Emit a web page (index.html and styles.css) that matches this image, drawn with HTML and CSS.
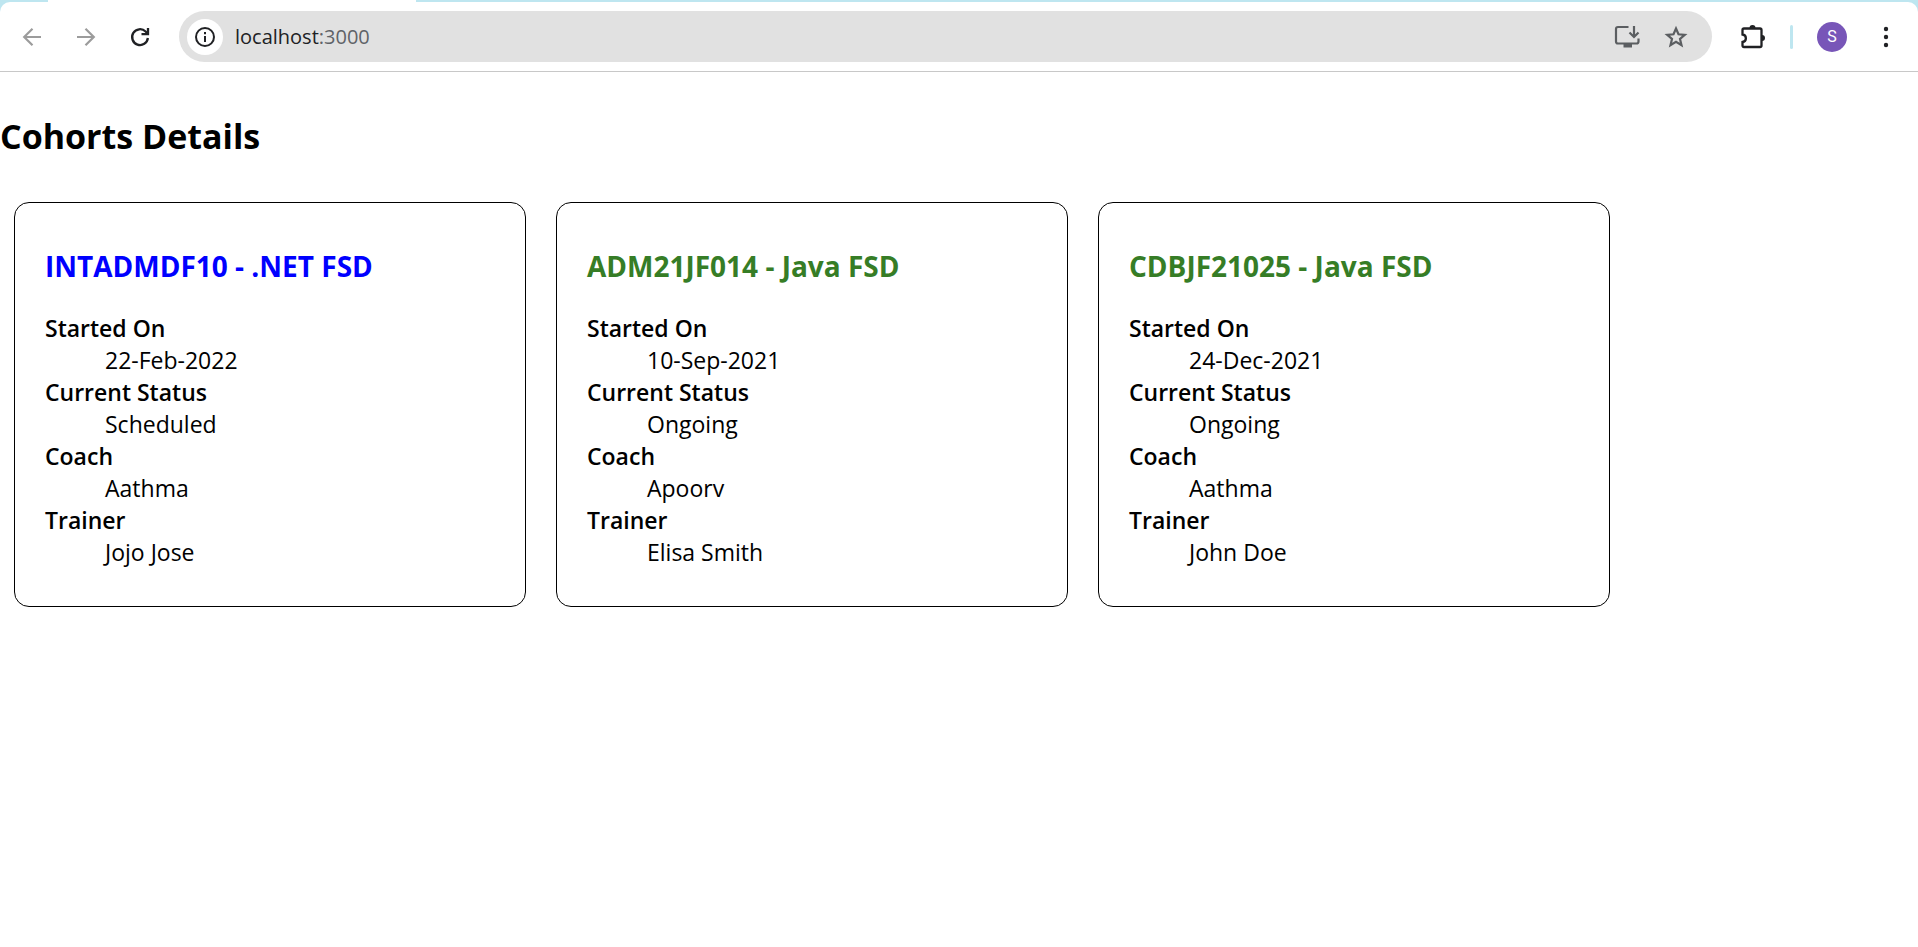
FILE: index.html
```html
<!DOCTYPE html>
<html lang="en">
<head>
<meta charset="utf-8">
<title>Cohorts Details</title>
<link rel="stylesheet" href="styles.css">
</head>
<body>
<header class="browser">
  <div class="tab-strip"><span class="active-tab"></span></div>
  <nav class="toolbar" aria-label="Browser toolbar">
    <button class="icon-button" type="button" aria-label="Back" disabled>
      <svg width="24" height="24" viewBox="0 0 24 24" fill="none" stroke="#9c9c9c" stroke-width="2.200"><path d="M21 12H4.500M12.500 3.700L4.200 12L12.500 20.300"/></svg>
    </button>
    <button class="icon-button" type="button" aria-label="Forward" disabled>
      <svg width="24" height="24" viewBox="0 0 24 24" fill="none" stroke="#9c9c9c" stroke-width="2.200"><path d="M3 12H19.500M11.500 3.700L19.800 12L11.500 20.300"/></svg>
    </button>
    <button class="icon-button" type="button" aria-label="Reload">
      <svg width="24" height="24" viewBox="0 0 24 24" fill="none" stroke="#202124" stroke-width="2.300"><path d="M19.900 13A7.900 7.900 0 1 1 17.600 6.500L19.500 8.500"/><path d="M20 3V9.200H13.500"/></svg>
    </button>
    <div class="omnibox">
      <button class="site-info" type="button" aria-label="View site information">
        <svg width="22" height="22" viewBox="0 0 22 22" fill="none" stroke="#202124" stroke-width="2"><circle cx="11" cy="11" r="9"/><path d="M11 10V16M11 6V8.200"/></svg>
      </button>
      <div class="address"><span>localhost</span><span class="port">:3000</span></div>
      <button class="icon-button" type="button" aria-label="Install app">
        <svg width="26" height="26" viewBox="0 0 26 26" fill="none" stroke="#5b5e61" stroke-width="2.200"><path d="M14.500 3H4Q2 3 2 5V17.500Q2 19.500 4 19.500H22.500Q24.500 19.500 24.500 17.500V14.500"/><path d="M20 2V13M15.500 8.500L20 13L24.500 8.500"/><path d="M9.500 21.500H18" stroke-width="4"/></svg>
      </button>
      <button class="icon-button" type="button" aria-label="Bookmark this page">
        <svg width="26" height="26" viewBox="0 0 26 26" fill="none" stroke="#5b5e61" stroke-width="2.200"><path d="M13 4.500L15.500 10.300L21.800 10.800L17 15L18.500 21.200L13 17.900L7.500 21.200L9 15L4.200 10.800L10.500 10.300Z"/></svg>
      </button>
    </div>
    <button class="icon-button extensions" type="button" aria-label="Extensions">
      <svg width="26" height="26" viewBox="0 0 26 26"><path d="M4 4.500H20Q21.500 4.500 21.500 6V21.500Q21.500 23 20 23H4Q2.500 23 2.500 21.500V18C7 17.500 7 11 2.500 10.500V6Q2.500 4.500 4 4.500Z" fill="none" stroke="#202124" stroke-width="2.300"/><path d="M9.500 4a3 3 0 0 1 6 0zM22 11a3 3 0 0 1 0 6z" fill="#202124"/></svg>
    </button>
    <span class="divider"></span>
    <button class="avatar" type="button" aria-label="Profile S">S</button>
    <button class="icon-button menu" type="button" aria-label="Menu">
      <svg width="24" height="24" viewBox="0 0 24 24" fill="#202124"><circle cx="12" cy="4" r="2.200"/><circle cx="12" cy="12" r="2.200"/><circle cx="12" cy="20" r="2.200"/></svg>
    </button>
  </nav>
</header>
<main>
  <h1 class="page-title">Cohorts Details</h1>
  <div class="cohorts">
    <section class="cohort">
      <h2 class="cohort-name scheduled">INTADMDF10 - .NET FSD</h2>
      <dl class="details">
        <dt>Started On</dt><dd>22-Feb-2022</dd>
        <dt>Current Status</dt><dd>Scheduled</dd>
        <dt>Coach</dt><dd>Aathma</dd>
        <dt>Trainer</dt><dd>Jojo Jose</dd>
      </dl>
    </section>
    <section class="cohort">
      <h2 class="cohort-name ongoing">ADM21JF014 - Java FSD</h2>
      <dl class="details">
        <dt>Started On</dt><dd>10-Sep-2021</dd>
        <dt>Current Status</dt><dd>Ongoing</dd>
        <dt>Coach</dt><dd>Apoorv</dd>
        <dt>Trainer</dt><dd>Elisa Smith</dd>
      </dl>
    </section>
    <section class="cohort">
      <h2 class="cohort-name ongoing">CDBJF21025 - Java FSD</h2>
      <dl class="details">
        <dt>Started On</dt><dd>24-Dec-2021</dd>
        <dt>Current Status</dt><dd>Ongoing</dd>
        <dt>Coach</dt><dd>Aathma</dd>
        <dt>Trainer</dt><dd>John Doe</dd>
      </dl>
    </section>
  </div>
</main>
</body>
</html>
```
FILE: styles.css
```css
* {
  box-sizing: border-box;
}

body {
  margin: 0;
  background: #fff;
  color: #000;
  font-family: "Segoe UI", "Open Sans", "Noto Sans", sans-serif;
}

button {
  padding: 0;
  border: 0;
  background: none;
  font-family: inherit;
}

svg {
  display: block;
}

.browser {
  background: #bee6f0;
  border-bottom: 1px solid #c8c8c8;
}

.tab-strip {
  height: 2px;
  padding-left: 48px;
}

.active-tab {
  display: block;
  width: 368px;
  height: 2px;
  background: #fff;
}

.toolbar {
  display: flex;
  align-items: center;
  height: 69px;
  padding: 0 20px;
  background: #fff;
  border-radius: 10px 10px 0 0;
}

.icon-button {
  display: flex;
  margin-right: 30px;
}

.omnibox {
  display: flex;
  flex: 1;
  align-items: center;
  height: 51px;
  margin-left: -3px;
  padding-left: 8px;
  background: #e1e1e1;
  border-radius: 26px;
}

.omnibox .icon-button {
  margin-right: 23px;
}

.site-info {
  display: grid;
  place-items: center;
  width: 36px;
  height: 36px;
  border-radius: 50%;
  background: #fff;
}

.address {
  flex: 1;
  margin-left: 12px;
  color: #202124;
  font-size: 20px;
  line-height: 28px;
}

.port {
  color: #5f6368;
}

.extensions {
  margin: 0 24px 0 28px;
}

.divider {
  width: 3px;
  height: 24px;
  border-radius: 2px;
  background: #bee6f0;
}

.avatar {
  width: 30px;
  height: 30px;
  margin: 0 27px 0 24px;
  border-radius: 50%;
  background: #7856b8;
  color: #fff;
  font-family: Roboto, sans-serif;
  font-size: 16px;
}

.menu {
  margin-right: 0;
}

.page-title {
  margin: 40px 0;
  font-size: 34px;
  line-height: 48px;
}

.cohorts {
  display: flex;
  flex-wrap: wrap;
  gap: 30px;
  padding: 2px 14px;
}

.cohort {
  width: 512px;
  padding: 44px 30px 38px;
  border: 1px solid #000;
  border-radius: 15px;
}

.cohort-name {
  margin: 0 0 27px;
  font-size: 28px;
  line-height: 38px;
}

.scheduled {
  color: #00f;
}

.ongoing {
  color: #367d26;
}

.details {
  margin: 0;
  font-size: 23px;
  line-height: 32px;
}

.details dt {
  font-weight: 600;
}

.details dd {
  margin-left: 60px;
}
```
